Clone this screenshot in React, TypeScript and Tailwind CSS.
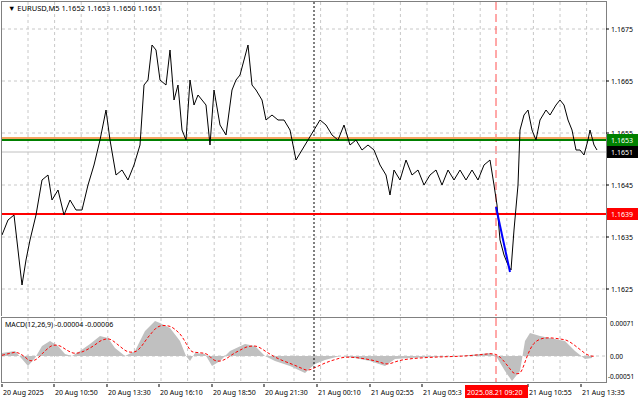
const P = "2,235 8,220 14,215 18,250 22,285 26,260 30,240 36,215 42,180 48,175 52,200 58,190 64,215 70,200 76,210 82,210 88,185 94,165 100,140 106,110 110,140 116,175 122,170 128,180 134,165 140,145 144,85 148,80 152,45 156,50 160,80 166,85 170,50 174,100 178,85 182,130 186,140 190,80 194,105 198,95 202,100 206,105 210,145 214,90 220,125 226,135 232,90 236,80 240,75 244,60 248,45 252,85 256,90 262,100 266,120 272,115 278,120 284,120 290,130 296,160 302,150 308,140 314,130 320,120 326,125 332,135 338,140 344,125 350,145 356,140 362,150 368,145 374,150 380,165 386,175 390,195 394,170 400,180 406,160 412,175 418,170 424,185 430,175 436,170 442,185 448,170 454,180 460,170 466,180 472,170 478,180 484,165 490,160 494,185 497,205 500,240 504,255 508,265 511,270 514,230 518,185 520,130 524,115 528,110 532,130 536,140 540,120 546,110 550,115 556,105 560,100 564,105 568,120 572,130 576,150 580,150 584,155 588,140 590,130 594,145 597,150";

const H: [number, number][] = [[2,-3],[15,-5],[22,3],[28,10],[35,2],[42,-10],[50,-15],[58,-10],[65,-2],[72,0],[80,-5],[90,-12],[100,-20],[108,-18],[115,-8],[125,0],[135,-5],[145,-25],[155,-35],[160,-33],[170,-28],[180,-15],[186,0],[190,5],[195,-3],[205,-2],[212,10],[220,5],[230,-5],[245,-12],[255,-10],[265,0],[275,5],[290,10],[305,17],[315,8],[325,4],[340,0],[355,2],[370,5],[385,10],[395,3],[410,2],[430,1],[460,0],[480,-2],[490,-3],[496,0],[505,15],[512,25],[520,15],[525,-15],[530,-23],[540,-20],[555,-17],[565,-15],[575,-5],[585,3],[592,2]];

const Z = 40;
function signal() {
  let s = 0;
  const out: string[] = [];
  for (let x = 2; x <= 594; x += 2) {
    let v = 0;
    for (let i = 0; i < H.length - 1; i++) {
      if (x >= H[i][0] && x <= H[i + 1][0]) {
        const t = (x - H[i][0]) / (H[i + 1][0] - H[i][0]);
        v = H[i][1] + t * (H[i + 1][1] - H[i][1]);
      }
    }
    s = s + (v - s) * 0.22;
    out.push(`${x},${(Z + s).toFixed(1)}`);
  }
  return out.join(" ");
}

const histPath =
  `M2,${Z} ` + H.map(([x, v]) => `L${x},${Z + v}`).join(" ") + ` L592,${Z} Z`;

const vgrid = Array.from({ length: 22 }, (_, i) => 28 + i * 26.6).filter((x) => x < 606);
const hgrid = [29, 81, 133, 185, 237, 289];
const prices = ["1.1675", "1.1665", "1.1655", "1.1645", "1.1635", "1.1625"];
const times: [number, string][] = [
  [3, "20 Aug 2025"], [55, "20 Aug 10:50"], [108, "20 Aug 13:30"], [160, "20 Aug 16:10"],
  [213, "20 Aug 18:50"], [265, "20 Aug 21:30"], [318, "21 Aug 00:10"], [371, "21 Aug 02:55"],
  [423, "21 Aug 05:3"], [529, "21 Aug 10:55"], [582, "21 Aug 13:35"],
];

export default function App() {
  return (
    <div className="w-[640px] h-[401px] bg-white flex flex-col overflow-hidden font-['DejaVu_Sans',sans-serif] text-[7px]">
      <svg width="640" height="316" className="block shrink-0">
        {vgrid.map((x) => <line key={x} x1={x} x2={x} y1={2} y2={316} stroke="#c8c8c8" strokeDasharray="3 3" />)}
        {hgrid.map((y) => <line key={y} x1={2} x2={606} y1={y} y2={y} stroke="#c8c8c8" strokeDasharray="3 3" />)}
        <line x1={314} x2={314} y1={2} y2={316} stroke="#000" strokeDasharray="2 2" />
        <line x1={496} x2={496} y1={2} y2={316} stroke="#ff5050" strokeDasharray="8 4" />
        <line x1={2} x2={606} y1={152} y2={152} stroke="#c0c0c0" />
        <line x1={2} x2={606} y1={138} y2={138} stroke="#f4a460" strokeWidth="2" />
        <line x1={2} x2={606} y1={140} y2={140} stroke="#008000" strokeWidth="2" />
        <line x1={2} x2={606} y1={214} y2={214} stroke="#ff0000" strokeWidth="2" />
        <polyline points={P} fill="none" stroke="#000" strokeWidth="1" />
        <line x1={496} y1={207} x2={510} y2={272} stroke="#0000ff" strokeWidth="2" />
        <rect x={1.5} y={1.5} width={605} height={320} fill="none" stroke="#808080" />
        <text x={8} y={11} fill="#000" className="text-[7.5px]">▼ EURUSD,M5  1.1652 1.1653 1.1650 1.1651</text>
        {hgrid.map((y, i) => (
          <g key={y}>
            <line x1={606} x2={609} y1={y} y2={y} stroke="#000" />
            <text x={611} y={y + 3}>{prices[i]}</text>
          </g>
        ))}
        <rect x={607} y={134} width={31} height={12} fill="#008000" />
        <text x={611} y={143} fill="#fff">1.1653</text>
        <rect x={607} y={146} width={31} height={12} fill="#000" />
        <text x={611} y={155} fill="#fff">1.1651</text>
        <rect x={607} y={208} width={31} height={12} fill="#ff0000" />
        <text x={611} y={217} fill="#fff">1.1639</text>
      </svg>
      <svg width="640" height="68" className="block shrink-0">
        {vgrid.map((x) => <line key={x} x1={x} x2={x} y1={2} y2={67} stroke="#c8c8c8" strokeDasharray="3 3" />)}
        <line x1={2} x2={606} y1={Z} y2={Z} stroke="#c8c8c8" strokeDasharray="3 3" />
        <path d={histPath} fill="#c0c0c0" />
        <polyline points={signal()} fill="none" stroke="#ff0000" strokeDasharray="3 2" />
        <line x1={314} x2={314} y1={2} y2={67} stroke="#000" strokeDasharray="2 2" />
        <line x1={496} x2={496} y1={2} y2={67} stroke="#ff5050" strokeDasharray="8 4" />
        <rect x={1.5} y={1.5} width={605} height={65} fill="none" stroke="#808080" />
        <text x={5} y={11}>MACD(12,26,9) -0.00004 -0.00006</text>
        <text x={610} y={10} className="text-[6.5px]">0.00071</text>
        <text x={610} y={Z + 3} className="text-[6.5px]">0.00</text>
        <text x={608} y={63} className="text-[6.5px]">-0.00051</text>
      </svg>
      <svg width="640" height="17" className="block shrink-0">
        {times.map(([x, t]) => (
          <g key={x}>
            <line x1={x - 1} x2={x - 1} y1={0} y2={3} stroke="#000" />
            <text x={x} y={11}>{t}</text>
          </g>
        ))}
        <rect x={465} y={1} width={63} height={13} fill="#ff0000" />
        <text x={467} y={11} fill="#fff">2025.08.21 09:20</text>
      </svg>
    </div>
  );
}
